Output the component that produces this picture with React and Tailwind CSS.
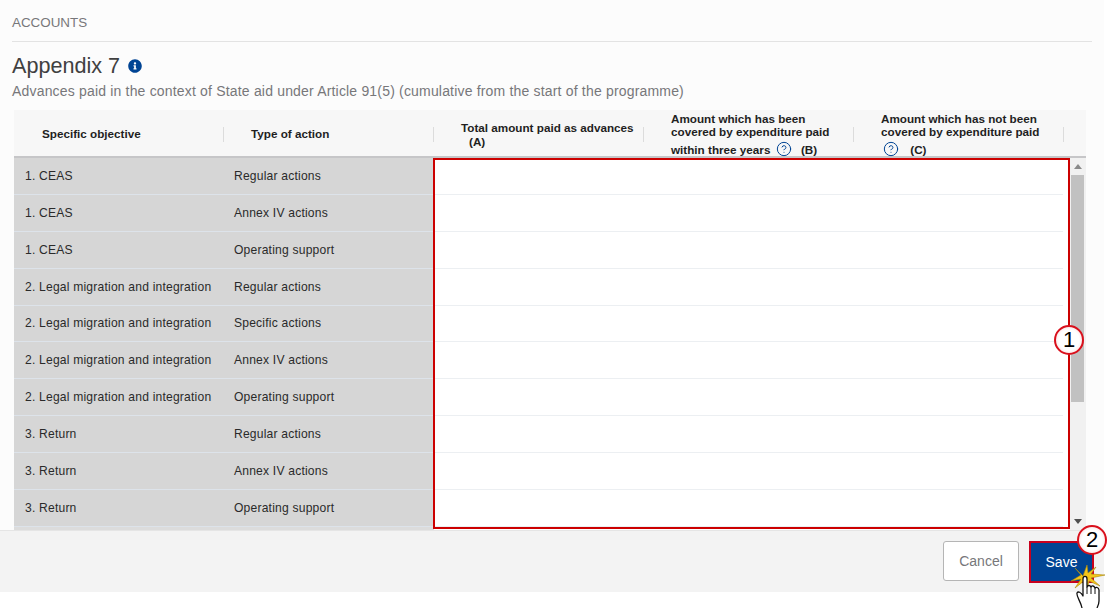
import { CircleHelp } from "lucide-react";
import { FaInfoCircle } from "react-icons/fa";

const rows = [
  ["1. CEAS", "Regular actions"],
  ["1. CEAS", "Annex IV actions"],
  ["1. CEAS", "Operating support"],
  ["2. Legal migration and integration", "Regular actions"],
  ["2. Legal migration and integration", "Specific actions"],
  ["2. Legal migration and integration", "Annex IV actions"],
  ["2. Legal migration and integration", "Operating support"],
  ["3. Return", "Regular actions"],
  ["3. Return", "Annex IV actions"],
  ["3. Return", "Operating support"],
];

const Help = () => <CircleHelp size={16} strokeWidth={1.5} className="inline-block text-[#004494] align-[-3px]" />;

const HeadCell = ({ children, className = "" }) => (
  <div className={`relative w-[210px] shrink-0 pl-[27px] text-[11.7px] font-bold text-[#1f1f1f] ${className}`}>
    {children}
    <span className="absolute right-0 top-[17px] h-[15px] w-px bg-[#dcdcdc]" />
  </div>
);

const Callout = ({ n, className }) => (
  <div className={`absolute flex h-[30px] w-[30px] items-center justify-center rounded-full border-2 border-[#d9101c] bg-[radial-gradient(circle,#ffffff_55%,#f6c9c9_100%)] text-[22px] leading-none text-black ${className}`}>
    {n}
  </div>
);

const ClickCursor = () => (
  <svg className="absolute left-[1070px] top-[562px]" width="38" height="46" viewBox="0 0 38 46">
    <path d="M13 14 L17 3 L18 11 L26 5 L21 12 L35 13 L21 16 L30 24 L19 19 L17 30 L14 19 L5 26 L11 17 L1 19 L11 13 L5 6 Z" fill="#f5c518" stroke="#a98a10" strokeWidth="0.6" />
    <path d="M12 46 C11 40 6 34 7 31 C8 29 11 30 13 34 L13 17 C13 13.500 17 13.500 17 17 L17 25 C18 23 20 23 21 25 C22 23.500 24 23.500 25 26 C26 25 28.500 25 29 28 L29 39 C29 42 28 44 27 46" fill="#ffffff" stroke="#111111" strokeWidth="1.3" strokeLinejoin="round" />
    <path d="M17 25 L17 32 M21 25 L21 32 M25 26 L25 32" stroke="#111111" strokeWidth="1" fill="none" />
  </svg>
);

export default function App() {
  return (
    <div className="relative h-[608px] w-[1109px] overflow-hidden bg-white font-['Liberation_Sans',Arial,sans-serif]">
      <div className="flex h-[592px] w-[1104px] flex-col bg-[#fcfcfc]">
        <div className="mx-3 h-[42px] border-b border-[#e3e3e3] pt-[15px] text-[13.4px] leading-4 text-[#77777a]">
          ACCOUNTS
        </div>
        <div className="ml-3 mt-[11px] flex h-[26px] items-center gap-2 text-[21.6px] leading-[26px] text-[#404040]">
          Appendix 7
          <FaInfoCircle size={14} className="text-[#004494]" />
        </div>
        <p className="ml-3 mt-[2px] h-[29px] text-[14px] leading-[21px] tracking-[0.18px] text-[#77777a]">
          Advances paid in the context of State aid under Article 91(5) (cumulative from the start of the programme)
        </p>

        <div className="ml-[14px] h-[48px] w-[1072px] shrink-0 border-b-2 border-[#c6c6c8] bg-[#f7f7f7]">
          <div className="flex h-full items-start leading-[14px]">
            <HeadCell className="pt-[17px] pl-[28px]">Specific objective</HeadCell>
            <HeadCell className="pt-[17px]">Type of action</HeadCell>
            <HeadCell className="pt-[11px]">
              Total amount paid as advances
              <div className="pl-2">(A)</div>
            </HeadCell>
            <HeadCell className="pt-[2px] leading-[13px]">
              Amount which has been
              <br />
              covered by expenditure paid
              <div className="mt-[3px] leading-[17px]">within three years <span className="ml-[2px] mr-[6px]"><Help /></span> (B)</div>
            </HeadCell>
            <HeadCell className="pt-[2px] leading-[13px]">
              Amount which has not been
              <br />
              covered by expenditure paid
              <div className="mt-[3px] leading-[17px]"><span className="ml-[2px]"><Help /></span> <span className="ml-2">(C)</span></div>
            </HeadCell>
          </div>
        </div>

        <div className="ml-[14px] flex h-[372px] w-[1072px] shrink-0 overflow-hidden">
          <div className="h-full w-[1056px] shrink-0 overflow-hidden bg-white">
            {rows.map((r, i) => (
              <div key={i} className="flex h-[36.9px] text-[12.1px]">
                <div className="flex w-[210px] items-center border-b border-[#dde3ea] bg-[#d6d6d6] pl-[11px] tracking-[0.2px] text-[#2a2a2a]">{r[0]}</div>
                <div className="flex w-[210px] items-center border-b border-[#dde3ea] bg-[#d6d6d6] pl-[10px] tracking-[0.2px] text-[#2a2a2a]">{r[1]}</div>
                <div className="w-[629px] border-b border-[#eceff2] bg-white" />
              </div>
            ))}
            <div className="h-[3px] w-[420px] bg-[#dcdcdc]" />
          </div>
          <div className="flex h-full w-[16px] flex-col bg-[#f1f1f1]">
            <div className="flex h-[17px] w-[15px] items-center justify-center">
              <span className="h-0 w-0 border-x-[4px] border-b-[5px] border-x-transparent border-b-[#8a8a8a]" />
            </div>
            <div className="ml-px h-[227px] w-[13px] bg-[#c1c1c1]" />
            <div className="flex-1" />
            <div className="flex h-[17px] w-[15px] items-center justify-center">
              <span className="h-0 w-0 border-x-[4px] border-t-[5px] border-x-transparent border-t-[#505050]" />
            </div>
          </div>
        </div>

        <div className="flex flex-1 items-start justify-end gap-[10px] border-t border-[#e5e5e5] bg-[#f3f3f3] pr-[10px] pt-[10px]">
          <button className="h-[40px] w-[76px] rounded-[3px] border border-[#b5b5b5] bg-white text-[14px] text-[#77777a]">Cancel</button>
          <button className="h-[42px] w-[65px] border-2 border-[#c8001e] bg-[#004494] text-[14px] text-white">Save</button>
        </div>
      </div>

      <div className="absolute left-[433px] top-[158px] h-[371px] w-[637px] border-2 border-[#cc0000]" />
      <Callout n="1" className="left-[1054px] top-[325px]" />
      <Callout n="2" className="left-[1077px] top-[525px]" />
      <ClickCursor />
    </div>
  );
}
